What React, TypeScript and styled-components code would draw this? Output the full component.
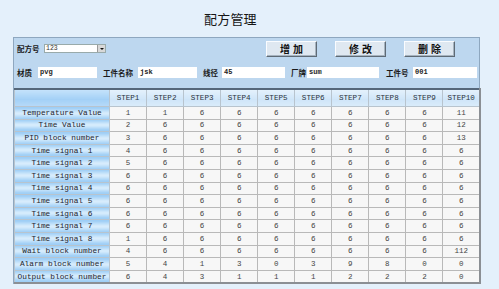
import styled, { createGlobalStyle } from 'styled-components';

const GlobalStyle = createGlobalStyle`
  html, body {
    margin: 0;
    padding: 0;
    background: #e4f0fb;
  }
  body {
    font-family: "Liberation Sans", "Noto Sans CJK SC", sans-serif;
  }
`;

const Page = styled.div`
  width: 499px;
  height: 289px;
  padding-left: 13px;
  box-sizing: border-box;
  overflow: hidden;
`;

const Title = styled.h1`
  margin: 0;
  padding: 11px 0 0 191px;
  height: 37px;
  box-sizing: border-box;
  font-family: "Noto Sans CJK SC", sans-serif;
  font-size: 13px;
  line-height: 15px;
  font-weight: 400;
  color: #151515;
  letter-spacing: 0.2px;
`;

const Panel = styled.div`
  width: 467px;
  box-sizing: border-box;
  background: #bdd7ef;
  border: 1px solid #8ea7bf;
  border-bottom: none;
`;

const Form = styled.div`
  padding: 2px 0 0 3px;
  height: 50px;
  box-sizing: border-box;
`;

const TopRow = styled.div`
  display: flex;
  align-items: center;
  height: 17px;
`;

const FieldRow = styled.div`
  display: flex;
  align-items: center;
  margin-top: 9px;
  height: 12px;
`;

const Label = styled.span<{ $w: number }>`
  width: ${p => p.$w}px;
  flex: none;
  font-family: "Noto Sans CJK SC", sans-serif;
  font-size: 7.5px;
  font-weight: 700;
  color: #1a1a1a;
  white-space: nowrap;
`;

const TextBox = styled.div<{ $w: number; $gap: number }>`
  width: ${p => p.$w}px;
  margin-right: ${p => p.$gap}px;
  height: 11px;
  flex: none;
  background: #fff;
  box-sizing: border-box;
  padding-left: 2px;
  font-family: "Liberation Mono", monospace;
  font-size: 7px;
  font-weight: 700;
  line-height: 11px;
  color: #222;
`;

const Select = styled.div`
  width: 62px;
  height: 9px;
  margin-left: 4px;
  background: #fff;
  border: 1px solid #9aa;
  box-sizing: border-box;
  display: flex;
  align-items: center;
  justify-content: space-between;
  font-family: "Liberation Mono", monospace;
  font-size: 6.5px;
  color: #333;
  padding-left: 1px;
`;

const Arrow = styled.span`
  width: 7px;
  height: 7px;
  background: #d8d8d8;
  border-left: 1px solid #999;
  display: flex;
  align-items: center;
  justify-content: center;
  &::after {
    content: '';
    border-left: 2px solid transparent;
    border-right: 2px solid transparent;
    border-top: 2px solid #111;
  }
`;

const Buttons = styled.div`
  display: flex;
  margin-left: 160px;
  gap: 18px;
`;

const Button = styled.button`
  width: 51px;
  height: 16px;
  padding: 0;
  background: #dfe8f1;
  border: 1px solid;
  border-color: #fafcff #5e6a75 #5e6a75 #fafcff;
  box-shadow: inset -1px -1px 0 #a6b3bf;
  font-family: "Noto Sans CJK SC", sans-serif;
  font-size: 10px;
  font-weight: 700;
  letter-spacing: 3px;
  text-indent: 3px;
  line-height: 14px;
  color: #111;
`;

const Grid = styled.table`
  width: 467px;
  table-layout: fixed;
  border-collapse: collapse;
  border-top: 2px solid #55677a;
  border-left: 1px solid #8b98a4;
  border-right: 2px solid #8b8f94;
  border-bottom: 2px solid #8b8f94;
  background: #f6f6f6;
`;

const Head = styled.th<{ $corner?: boolean }>`
  height: 16px;
  padding: 0;
  border: 1px solid #b8c4ce;
  background: ${p =>
    p.$corner
      ? 'linear-gradient(#c4e2fb, #a3d0f6 60%, #b5d9f8)'
      : 'linear-gradient(#e4f1fc, #cfe5f8 60%, #d9ebfa)'};
  font-family: "Liberation Mono", monospace;
  font-size: 7.6px;
  font-weight: 400;
  color: #2a3340;
`;

const RowName = styled.td`
  height: 11.6px;
  padding: 0;
  border: 1px solid #b8c4ce;
  background: linear-gradient(#98cbf5, #d7ecfc 45%, #d7ecfc 55%, #98cbf5);
  font-family: "Liberation Mono", monospace;
  font-size: 7.8px;
  line-height: 10px;
  text-align: center;
  white-space: nowrap;
  overflow: visible;
  color: #1f2630;
`;

const Cell = styled.td`
  height: 11.6px;
  padding: 0;
  border: 1px solid #b9b9b9;
  background: #f7f7f7;
  font-family: "Liberation Mono", monospace;
  font-size: 7.5px;
  line-height: 10px;
  text-align: center;
  color: #444;
`;

const rows: [string, number[]][] = [
  ['Temperature Value', [1, 1, 6, 6, 6, 6, 6, 6, 6, 11]],
  ['Time Value', [2, 6, 6, 6, 6, 6, 6, 6, 6, 12]],
  ['PID block number', [3, 6, 6, 6, 6, 6, 6, 6, 6, 13]],
  ['Time signal 1', [4, 6, 6, 6, 6, 6, 6, 6, 6, 6]],
  ['Time signal 2', [5, 6, 6, 6, 6, 6, 6, 6, 6, 6]],
  ['Time signal 3', [6, 6, 6, 6, 6, 6, 6, 6, 6, 6]],
  ['Time signal 4', [6, 6, 6, 6, 6, 6, 6, 6, 6, 6]],
  ['Time signal 5', [6, 6, 6, 6, 6, 6, 6, 6, 6, 6]],
  ['Time signal 6', [6, 6, 6, 6, 6, 6, 6, 6, 6, 6]],
  ['Time signal 7', [6, 6, 6, 6, 6, 6, 6, 6, 6, 6]],
  ['Time signal 8', [1, 6, 6, 6, 6, 6, 6, 6, 6, 6]],
  ['Wait block number', [4, 6, 6, 6, 6, 6, 6, 6, 6, 112]],
  ['Alarm block number', [5, 4, 1, 3, 0, 3, 9, 8, 0, 0]],
  ['Output block number', [6, 4, 3, 1, 1, 1, 2, 2, 2, 0]],
];

const steps = Array.from({ length: 10 }, (_, i) => `STEP${i + 1}`);

export default function App() {
  return (
    <Page>
      <GlobalStyle />
      <Title>配方管理</Title>
      <Panel>
        <Form>
          <TopRow>
            <Label $w={23}>配方号</Label>
            <Select>
              123
              <Arrow />
            </Select>
            <Buttons>
              <Button>增加</Button>
              <Button>修改</Button>
              <Button>删除</Button>
            </Buttons>
          </TopRow>
          <FieldRow>
            <Label $w={21}>材质</Label>
            <TextBox $w={59} $gap={6}>pvg</TextBox>
            <Label $w={35}>工件名称</Label>
            <TextBox $w={59} $gap={6}>jsk</TextBox>
            <Label $w={19}>线径</Label>
            <TextBox $w={63} $gap={6}>45</TextBox>
            <Label $w={16}>厂牌</Label>
            <TextBox $w={72} $gap={7}>sum</TextBox>
            <Label $w={27}>工件号</Label>
            <TextBox $w={64} $gap={0}>001</TextBox>
          </FieldRow>
        </Form>
        <Grid>
          <colgroup>
            <col style={{ width: 95 }} />
            {steps.map(s => (
              <col key={s} />
            ))}
          </colgroup>
          <thead>
            <tr>
              <Head $corner />
              {steps.map(s => (
                <Head key={s}>{s}</Head>
              ))}
            </tr>
          </thead>
          <tbody>
            {rows.map(([name, vals]) => (
              <tr key={name}>
                <RowName>{name}</RowName>
                {vals.map((v, i) => (
                  <Cell key={i}>{v}</Cell>
                ))}
              </tr>
            ))}
          </tbody>
        </Grid>
      </Panel>
    </Page>
  );
}
